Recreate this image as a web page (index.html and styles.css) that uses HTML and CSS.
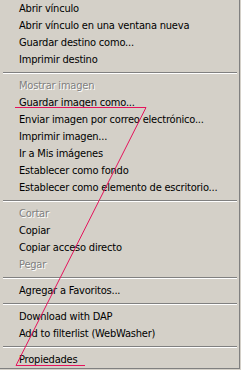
FILE: index.html
```html
<!DOCTYPE html>
<html lang="es">
<head>
    <meta charset="UTF-8">
    <title>Menú contextual</title>
    <link rel="stylesheet" href="styles.css">
</head>
<body>
    <div class="menu">
        <div class="item">Abrir vínculo</div>
        <div class="item">Abrir vínculo en una ventana nueva</div>
        <div class="item">Guardar destino como...</div>
        <div class="item">Imprimir destino</div>
        <div class="sep"></div>
        <div class="item disabled">Mostrar imagen</div>
        <div class="item">Guardar imagen como...</div>
        <div class="item">Enviar imagen por correo electrónico...</div>
        <div class="item">Imprimir imagen...</div>
        <div class="item">Ir a Mis imágenes</div>
        <div class="item">Establecer como fondo</div>
        <div class="item">Establecer como elemento de escritorio...</div>
        <div class="sep"></div>
        <div class="item disabled">Cortar</div>
        <div class="item">Copiar</div>
        <div class="item">Copiar acceso directo</div>
        <div class="item disabled">Pegar</div>
        <div class="sep"></div>
        <div class="item">Agregar a Favoritos...</div>
        <div class="sep"></div>
        <div class="item">Download with DAP</div>
        <div class="item">Add to filterlist (WebWasher)</div>
        <div class="sep"></div>
        <div class="item">Propiedades</div>

        <svg class="scribble" width="241" height="370" viewBox="0 0 241 370">
            <polyline points="15,107.5 146,107.5 16,365.5 85,365.5" fill="none" stroke="#e5135c" stroke-width="1"/>
        </svg>
    </div>
</body>
</html>
```

FILE: styles.css
```css
body {
    margin: 0;
    background-color: #d4d0c8;
    font-family: "DejaVu Sans Condensed", "DejaVu Sans", sans-serif;
    font-stretch: condensed;
    font-size: 11px;
    letter-spacing: -0.2px;
    color: #000;
}

.menu {
    position: relative;
    width: 239px;
    height: 368px;
    background-color: #d4d0c8;
    border-right: 1px solid #808080;
    border-bottom: 1px solid #808080;
    overflow: hidden;
}

.item {
    height: 17px;
    line-height: 17px;
    padding-left: 19px;
    white-space: nowrap;
}

.disabled {
    color: #808080;
    text-shadow: 1px 1px 0 #fff;
}

.sep {
    height: 9px;
    display: flex;
    flex-direction: column;
    justify-content: center;
    margin: 0 2px 0 3px;
}

.sep::before {
    content: "";
    border-top: 1px solid #808080;
    border-bottom: 1px solid #fff;
}

.scribble {
    position: absolute;
    left: 0;
    top: 0;
}
```
